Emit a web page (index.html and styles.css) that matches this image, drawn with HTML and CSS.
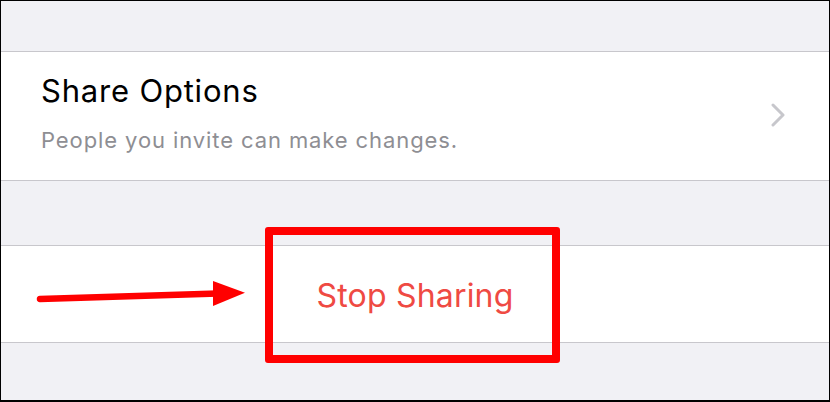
FILE: index.html
```html
<!DOCTYPE html>
<html>
<head>
<meta charset="utf-8">
<link rel="stylesheet" href="styles.css">
</head>
<body>
<div class="frame">
  <div class="gap gap-top"></div>
  <div class="cell cell-options">
    <div class="cell-text">
      <div class="title">Share Options</div>
      <div class="subtitle">People you invite can make changes.</div>
    </div>
    <svg class="chevron" width="16" height="24" viewBox="0 0 16 24">
      <path d="M3 2 L13 12 L3 22" fill="none" stroke="#c7c7cc" stroke-width="3" stroke-linecap="round" stroke-linejoin="round"/>
    </svg>
  </div>
  <div class="gap gap-mid"></div>
  <div class="cell cell-stop">
    <div class="stop">Stop Sharing</div>
  </div>
  <div class="gap gap-bottom"></div>

  <div class="highlight"></div>
  <svg class="arrow" width="830" height="402" viewBox="0 0 830 402">
    <line x1="40" y1="299" x2="218" y2="293.5" stroke="#ff0000" stroke-width="6.5" stroke-linecap="round"/>
    <polygon points="213,281 245,292.7 213,306" fill="#ff0000"/>
  </svg>
</div>
</body>
</html>
```
FILE: styles.css
```css
html, body {
  margin: 0;
  padding: 0;
  background: #000;
}
.frame {
  position: relative;
  box-sizing: border-box;
  width: 830px;
  height: 402px;
  border-top: 1px solid #000;
  border-left: 1px solid #000;
  border-right: 1px solid #000;
  border-bottom: 2px solid #000;
  background: #f1f1f5;
  display: flex;
  flex-direction: column;
  font-family: Inter, "Noto Sans", sans-serif;
  overflow: hidden;
}
.gap {
  flex: none;
  border-bottom: 1px solid #c8c7cc;
}
.gap-top { height: 50px; }
.gap-mid { height: 64px; border-top: 1px solid #c8c7cc; }
.gap-bottom { flex: 1; border-top: 1px solid #c8c7cc; border-bottom: none; }
.cell {
  background: #fff;
  flex: none;
  display: flex;
  align-items: center;
}
.cell-options {
  box-sizing: border-box;
  height: 128px;
  padding: 0 43px 0 40px;
  justify-content: space-between;
}
.cell-text {
  align-self: flex-start;
  display: flex;
  flex-direction: column;
  padding-top: 22px;
}
.title {
  font-size: 31px;
  line-height: 34px;
  color: #000;
  letter-spacing: 0.8px;
}
.subtitle {
  font-size: 22px;
  line-height: 26px;
  color: #8e8e93;
  letter-spacing: 0.9px;
  margin-top: 19px;
}
.chevron {
  flex: none;
  margin-top: -2px;
}
.cell-stop {
  height: 96px;
  justify-content: center;
}
.stop {
  font-size: 32px;
  color: #ef4a43;
  letter-spacing: 0.2px;
  margin-top: 2px;
}
.highlight {
  position: absolute;
  left: 264px;
  top: 226px;
  width: 295px;
  height: 136px;
  box-sizing: border-box;
  border: 8px solid #ff0000;
  border-radius: 3px;
}
.arrow {
  position: absolute;
  left: -1px;
  top: -1px;
}
```
